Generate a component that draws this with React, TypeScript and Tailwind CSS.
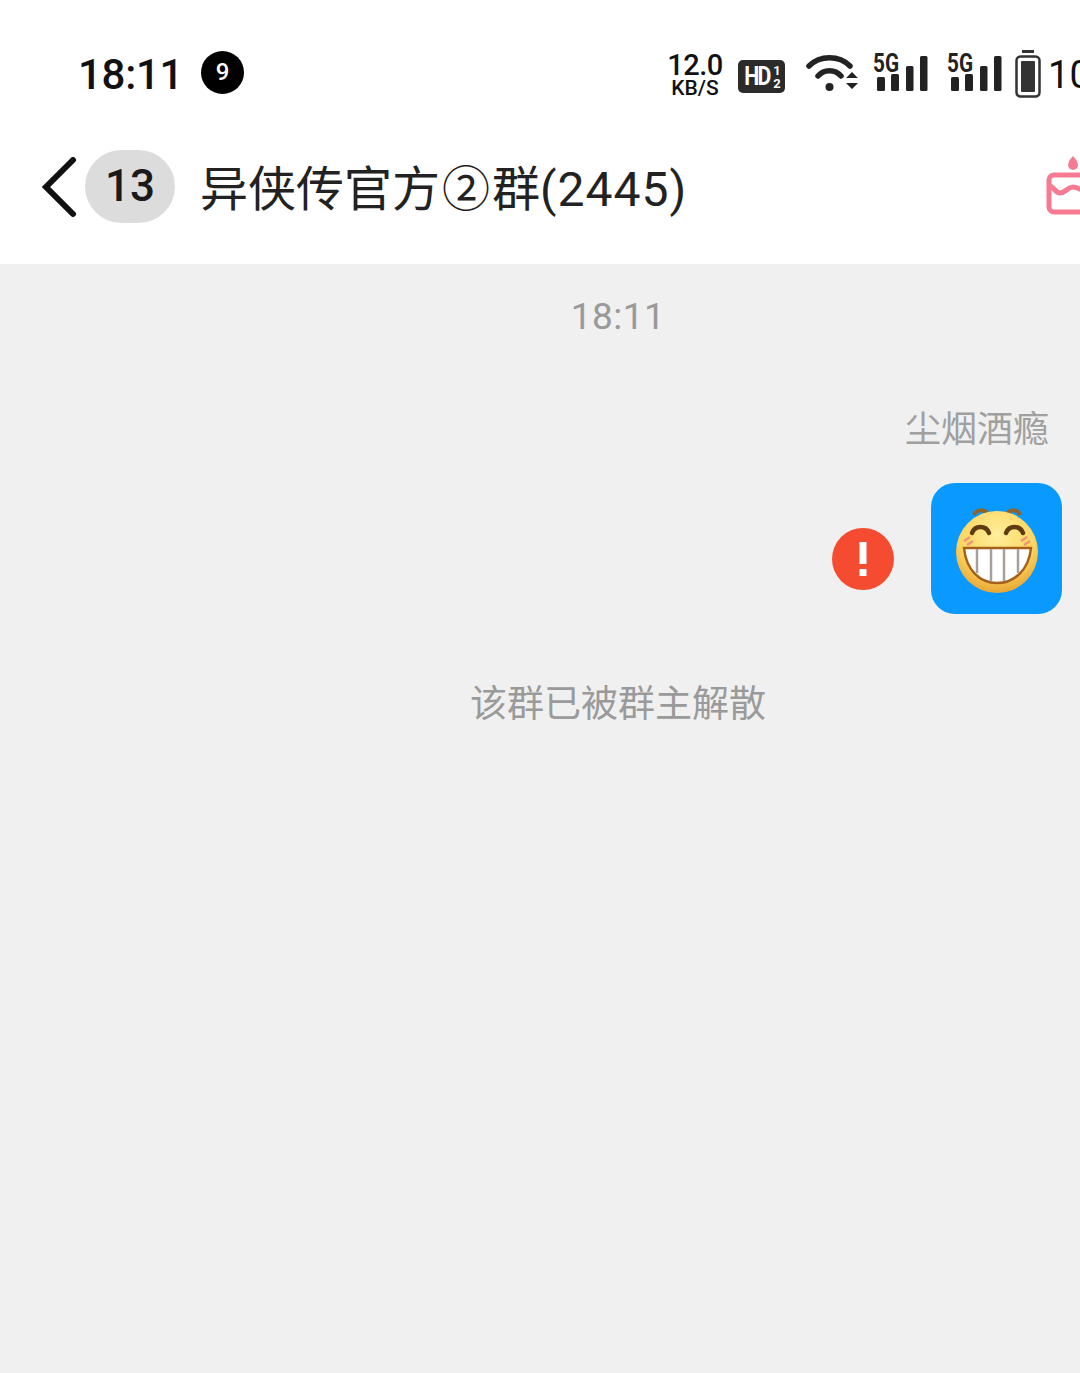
import React from "react";

const cjk = "font-['Roboto','Noto_Sans_CJK_SC',sans-serif]";

const SignalIcon = () => (
  <svg width="56" height="40" viewBox="0 0 56 40" fill="#222222" className="block overflow-visible">
    <rect x="4" y="25" width="8" height="14" rx="1.5" />
    <rect x="18" y="22" width="8" height="17" rx="1.5" />
    <rect x="33" y="14" width="7.5" height="25" rx="1.5" />
    <rect x="47" y="4" width="7.5" height="35" rx="1.5" />
    <text x="0" y="20" fontSize="26" fontWeight="700" fontFamily="Roboto" textLength="26" lengthAdjust="spacingAndGlyphs">
      5G
    </text>
  </svg>
);

const WifiIcon = () => (
  <svg width="52" height="40" viewBox="0 0 52 40" fill="none" className="block">
    <path d="M3 13 C14 2 33 2 44 13" stroke="#222222" strokeWidth="5.5" strokeLinecap="round" />
    <path d="M12 23 C18 16 29 16 35 23" stroke="#222222" strokeWidth="5.5" strokeLinecap="round" />
    <circle cx="23.5" cy="34" r="4" fill="#222222" />
    <path d="M40 25 L46 19 L52 25 Z M40 30 L52 30 L46 36 Z" fill="#222222" />
  </svg>
);

const BatteryIcon = () => (
  <svg width="26" height="48" viewBox="0 0 26 48" fill="none" className="block">
    <rect x="7" y="0" width="12" height="3" fill="#333333" />
    <rect x="1.5" y="6.5" width="23" height="40" rx="4" stroke="#333333" strokeWidth="2.5" />
    <rect x="6" y="11" width="14" height="31" rx="1" fill="#333333" />
  </svg>
);

const CakeIcon = () => (
  <svg width="46" height="60" viewBox="0 0 46 60" fill="none" className="block">
    <path d="M27 15 C20 14 21 7 27 1 C33 7 34 14 27 15 Z" fill="#f57a92" />
    <path d="M46 20 H8 a5 5 0 0 0 -5 5 V52 a5 5 0 0 0 5 5 H46" stroke="#f57a92" strokeWidth="5" />
    <path d="M3 31 C8 31 9 38 14 38 C20 38 21 32 27 32 C33 32 37 38 46 36" stroke="#f57a92" strokeWidth="5" />
  </svg>
);

const GrinEmoji = () => (
  <svg width="84" height="88" viewBox="0 0 84 88" fill="none" className="block">
    <defs>
      <radialGradient id="face" cx="50%" cy="30%" r="70%">
        <stop offset="0%" stopColor="#ffee9c" />
        <stop offset="65%" stopColor="#fcd65f" />
        <stop offset="100%" stopColor="#e9a535" />
      </radialGradient>
    </defs>
    <path d="M19 10 C21 4 30 4 33 9" stroke="#8f6428" strokeWidth="4" />
    <path d="M52 9 C55 4 63 4 65 10" stroke="#8f6428" strokeWidth="4" />
    <circle cx="42" cy="47" r="41" fill="url(#face)" />
    <path d="M17 28 C20 20 31 20 34 28" stroke="#5f3a12" strokeWidth="4.5" strokeLinecap="round" />
    <path d="M51 28 C54 20 65 20 68 28" stroke="#5f3a12" strokeWidth="4.5" strokeLinecap="round" />
    <path d="M9 36 L15 32 M12 40 L18 36" stroke="#f2947a" strokeWidth="2.5" />
    <path d="M66 36 L72 32 M69 40 L75 36" stroke="#f2947a" strokeWidth="2.5" />
    <path d="M9 43 H76 C74 64 60 78 42 78 C24 78 11 64 9 43 Z" fill="#ffffff" stroke="#a5601c" strokeWidth="2.5" />
    <path d="M22 44 V68 M36 44 V76 M49 44 V76 M63 44 V68" stroke="#a8a09a" strokeWidth="2.5" />
  </svg>
);

const StatusBar = () => (
  <div className={`h-[132px] shrink-0 flex items-start bg-white text-[#111111] ${cjk}`}>
    <span className="shrink-0 ml-[78px] mt-[50px] text-[42px] leading-[50px] font-medium tracking-[-0.3px]">18:11</span>
    <span className="shrink-0 ml-[18px] mt-[51px] w-[43px] h-[43px] rounded-full bg-black text-white text-[24px] leading-[43px] text-center font-medium">
      9
    </span>
    <div className="shrink-0 ml-[424px] mt-[52px] w-[54px] flex flex-col items-center text-[#111111]">
      <span className="text-[29px] leading-[26px] font-medium tracking-[-0.5px]">12.0</span>
      <span className="text-[21px] leading-[20px] font-medium">KB/S</span>
    </div>
    <div className="shrink-0 ml-[16px] mt-[60px] w-[47px] h-[33px] rounded-[5px] bg-[#2b2b2b] text-white flex items-center justify-center gap-[1px] font-bold">
      <span className="text-[25px] leading-none tracking-[-2px] scale-x-85">HD</span>
      <span className="flex flex-col text-[13px] leading-[13px]">
        <span>1</span>
        <span>2</span>
      </span>
    </div>
    <div className="shrink-0 ml-[21px] mt-[53px]">
      <WifiIcon />
    </div>
    <div className="shrink-0 ml-[15px] mt-[52px]">
      <SignalIcon />
    </div>
    <div className="shrink-0 ml-[18px] mt-[52px]">
      <SignalIcon />
    </div>
    <div className="shrink-0 ml-[12px] mt-[50px]">
      <BatteryIcon />
    </div>
    <span className="shrink-0 ml-[7px] mt-[52px] text-[38px] leading-[46px] whitespace-nowrap">100</span>
  </div>
);

const NavBar = () => (
  <div className={`h-[132px] shrink-0 flex items-start bg-white ${cjk}`}>
    <svg width="36" height="62" viewBox="0 0 36 62" fill="none" className="ml-[41px] mt-[25px] shrink-0">
      <path d="M32 3 L5 30 L32 57" stroke="#111111" strokeWidth="6" strokeLinecap="round" strokeLinejoin="miter" />
    </svg>
    <span className="ml-[8px] mt-[18px] w-[90px] h-[73px] shrink-0 rounded-full bg-[#dcdcdc] text-[#1a1a1a] text-[44px] leading-[73px] text-center font-medium">
      13
    </span>
    <span className="ml-[25px] mt-[27px] w-[846px] shrink-0 text-[48px] leading-[62px] text-[#222222] whitespace-nowrap">
      异侠传官方<span className="mx-[2px]">②</span>群<span className="tracking-[1px]">(2445)</span>
    </span>
    <div className="shrink-0 mt-[23px]">
      <CakeIcon />
    </div>
  </div>
);

export default function App() {
  return (
    <div className={`w-[1080px] h-[1373px] overflow-hidden flex flex-col bg-[#f0f0f0] ${cjk}`}>
      <StatusBar />
      <NavBar />
      <div className="flex-1 flex flex-col text-[#999999]">
        <div className="pl-[156px] pt-[31px] text-center text-[37px] leading-[44px] tracking-[0.5px]">18:11</div>
        <div className="mt-[67px] pr-[31px] text-right text-[36px] leading-[48px] text-[#a0a0a0]">尘烟酒瘾</div>
        <div className="mt-[29px] pr-[18px] flex items-start justify-end">
          <div className="mt-[45px] w-[62px] h-[62px] rounded-full bg-[#f54b30] flex items-center justify-center">
            <svg width="8" height="34" viewBox="0 0 8 34" fill="#ffffff">
              <rect x="0.5" y="0" width="7" height="22" />
              <rect x="0.5" y="27" width="7" height="7" />
            </svg>
          </div>
          <div className="ml-[37px] w-[131px] h-[131px] rounded-[24px] bg-[#0a99ff] flex items-center justify-center">
            <GrinEmoji />
          </div>
        </div>
        <div className="mt-[67px] pl-[156px] text-center text-[37px] leading-[48px] text-[#9a9a9a]">该群已被群主解散</div>
      </div>
    </div>
  );
}
